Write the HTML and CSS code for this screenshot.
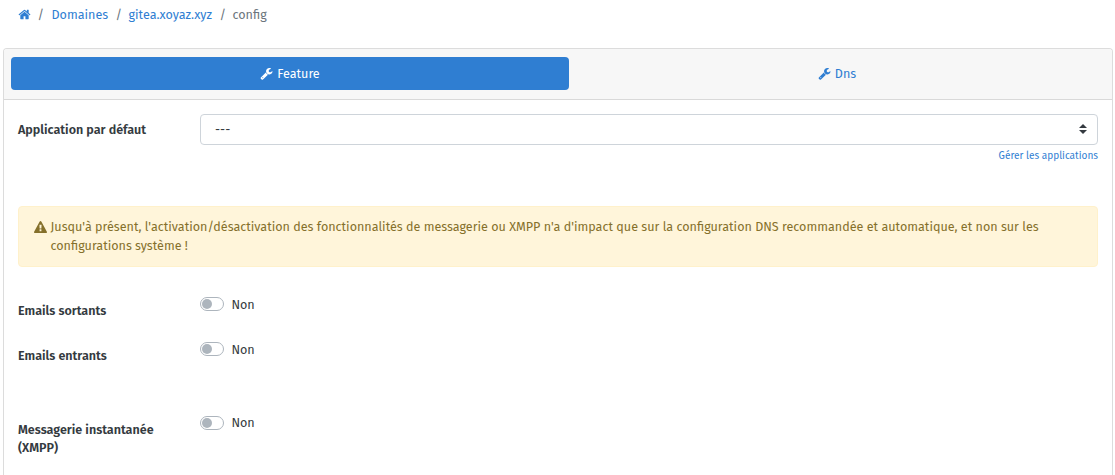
FILE: index.html
```html
<!DOCTYPE html>
<html lang="fr">
<head>
<meta charset="utf-8">
<title>gitea.xoyaz.xyz – config</title>
<link rel="stylesheet" href="styles.css">
</head>
<body>
<svg class="defs" width="0" height="0" aria-hidden="true">
<symbol id="home" viewBox="0 0 1792 1792"><path d="M1472 992v480q0 26-19 45t-45 19h-384v-384h-256v384h-384q-26 0-45-19t-19-45v-480q0-1 .5-3t.5-3l575-474 575 474q1 2 1 6zm223-69l-62 74q-8 9-21 11h-3q-13 0-21-7l-692-577-692 577q-12 8-24 7-13-2-21-11l-62-74q-8-10-7-23.5t11-21.500l719-599q32-26 76-26t76 26l244 204v-195q0-14 9-23t23-9h192q14 0 23 9t9 23v408l219 182q10 8 11 21.500t-7 23.500z"/></symbol>
<symbol id="wrench" viewBox="0 0 1792 1792"><path d="M448 1472q0-26-19-45t-45-19-45 19-19 45 19 45 45 19 45-19 19-45zm644-420l-682 682q-37 37-90 37-52 0-91-37l-106-108q-38-36-38-90 0-53 38-91l681-681q39 98 114.500 173.500t173.500 114.500zm634-435q0 39-23 106-47 134-164.500 217.500t-258.500 83.500q-185 0-316.500-131.500t-131.500-316.500 131.500-316.500 316.500-131.500q58 0 121.500 16.500t107.500 46.500q16 11 16 28t-16 28l-293 169v224l193 107q5-3 79-48.500t135.500-81 70.500-35.500q15 0 23.500 10t8.500 25z"/></symbol>
<symbol id="warning" viewBox="0 0 1792 1792"><path d="M1024 1375v-190q0-14-9.500-23.500t-22.500-9.500h-192q-13 0-22.500 9.500t-9.500 23.500v190q0 14 9.500 23.500t22.500 9.500h192q13 0 22.500-9.500t9.500-23.500zm-2-374l18-459q0-12-10-19-13-11-24-11h-220q-11 0-24 11-10 7-10 21l17 457q0 10 10 16.500t24 6.500h185q14 0 23.500-6.500t10.500-16.500zm-14-934l768 1408q35 63-2 126-17 29-46.500 46t-63.500 17h-1536q-34 0-63.500-17t-46.500-46q-37-63-2-126l768-1408q17-31 47-49t65-18 65 18 47 49z"/></symbol>
</svg>
<nav class="breadcrumb">
  <a class="crumb-home" href="#"><svg class="icon"><use href="#home"/></svg></a>
  <span class="sep">/</span><a class="crumb-domains" href="#">Domaines</a>
  <span class="sep">/</span><a class="crumb-name" href="#">gitea.xoyaz.xyz</a>
  <span class="sep">/</span><span>config</span>
</nav>
<main class="card">
  <div class="tabs">
    <a class="tab active" href="#"><svg class="icon"><use href="#wrench"/></svg><span>Feature</span></a>
    <a class="tab" href="#"><svg class="icon"><use href="#wrench"/></svg><span>Dns</span></a>
  </div>
  <div class="body">
    <div class="row row-select">
      <div class="label">Application par défaut</div>
      <div class="field">
        <div class="select"><span>---</span><svg class="caret" viewBox="0 0 4 5"><path d="M2 0L0 2h4zm0 5L0 3h4z"/></svg></div>
        <a class="manage" href="#">Gérer les applications</a>
      </div>
    </div>
    <div class="alert">
      <svg class="icon"><use href="#warning"/></svg>
      <p>Jusqu'à présent, l'activation/désactivation des fonctionnalités de messagerie ou XMPP n'a d'impact que sur la configuration DNS recommandée et automatique, et non sur les configurations système !</p>
    </div>
    <div class="row row-out">
      <div class="label">Emails sortants</div>
      <div class="switch"><i class="track"></i><span>Non</span></div>
    </div>
    <div class="row row-in">
      <div class="label">Emails entrants</div>
      <div class="switch"><i class="track"></i><span>Non</span></div>
    </div>
    <div class="row row-xmpp">
      <div class="label">Messagerie instantanée (XMPP)</div>
      <div class="switch"><i class="track"></i><span>Non</span></div>
    </div>
  </div>
</main>
</body>
</html>
```
FILE: styles.css
```css
* { box-sizing: border-box; }
html, body { margin: 0; }
body { display: flex; flex-direction: column; height: 475px; background: #fff; color: #343a40; font: 12.57px/18px "Fira Sans", "Noto Sans", sans-serif; }
a { color: #2f7ed2; text-decoration: none; }
.defs { position: absolute; }
.icon { display: block; width: 13px; height: 13px; fill: currentColor; flex: none; }
.breadcrumb { display: flex; align-items: center; flex: none; height: 30px; padding-left: 17.5px; color: #6c757d; }
.crumb-home .icon { margin-top: -1px; }
.sep { width: 6px; margin: 0 7px; text-align: center; }
.crumb-domains { width: 57px; margin-left: 1px; }
.crumb-name { width: 84px; }
.card { flex: 1; margin: 18px 2px 0 3px; border: 1px solid #dcdcdc; border-bottom: 0; border-radius: 4px 4px 0 0; }
.tabs { display: flex; height: 51px; padding: 8px 7px 9px; background: #f7f7f7; border-bottom: 1px solid #d9d9d9; border-radius: 3px 3px 0 0; }
.tab { flex: 1; display: flex; align-items: center; justify-content: center; gap: 4px; border-radius: 4px; }
.tab.active { flex: 0 0 558px; background: #2f7ed2; color: #fff; }
.body { padding: 14px 14px 0; }
.row { display: flex; }
.row-select { height: 92px; }
.label { width: 182px; flex: none; padding: 6px 30px 0 0; font-weight: 600; }
.row-select .label { padding-top: 7px; }
.field { flex: 1; }
.select { display: flex; justify-content: space-between; align-items: center; height: 31px; padding: 0 10px 0 14px; border: 1px solid #ced4da; border-radius: 4px; }
.caret { width: 8px; height: 10px; margin-bottom: 2px; fill: #343a40; }
.manage { display: block; width: max-content; margin: 2px 0 0 auto; font-size: 10.06px; }
.alert { display: flex; height: 61px; padding: 10px 15px; background: #fff5da; border: 1px solid #fff1cb; border-radius: 4px; color: #85702b; line-height: 19px; }
.alert .icon { margin: 4px 3.5px 0 0; }
.alert p { margin: 0; }
.row-out { height: 45px; margin-top: 29px; }
.row-in { height: 74px; }
.switch { display: flex; height: 18px; align-items: center; gap: 7.4px; }
.track { display: block; width: 24px; height: 14px; margin-bottom: 2px; padding: 1px; border: 1px solid #adb5bd; border-radius: 7px; }
.track::before { content: ""; display: block; width: 10px; height: 10px; border-radius: 50%; background: #adb5bd; }
.row-xmpp .switch { margin-top: -1px; }
.row-xmpp .track { margin-bottom: 0; }
```
